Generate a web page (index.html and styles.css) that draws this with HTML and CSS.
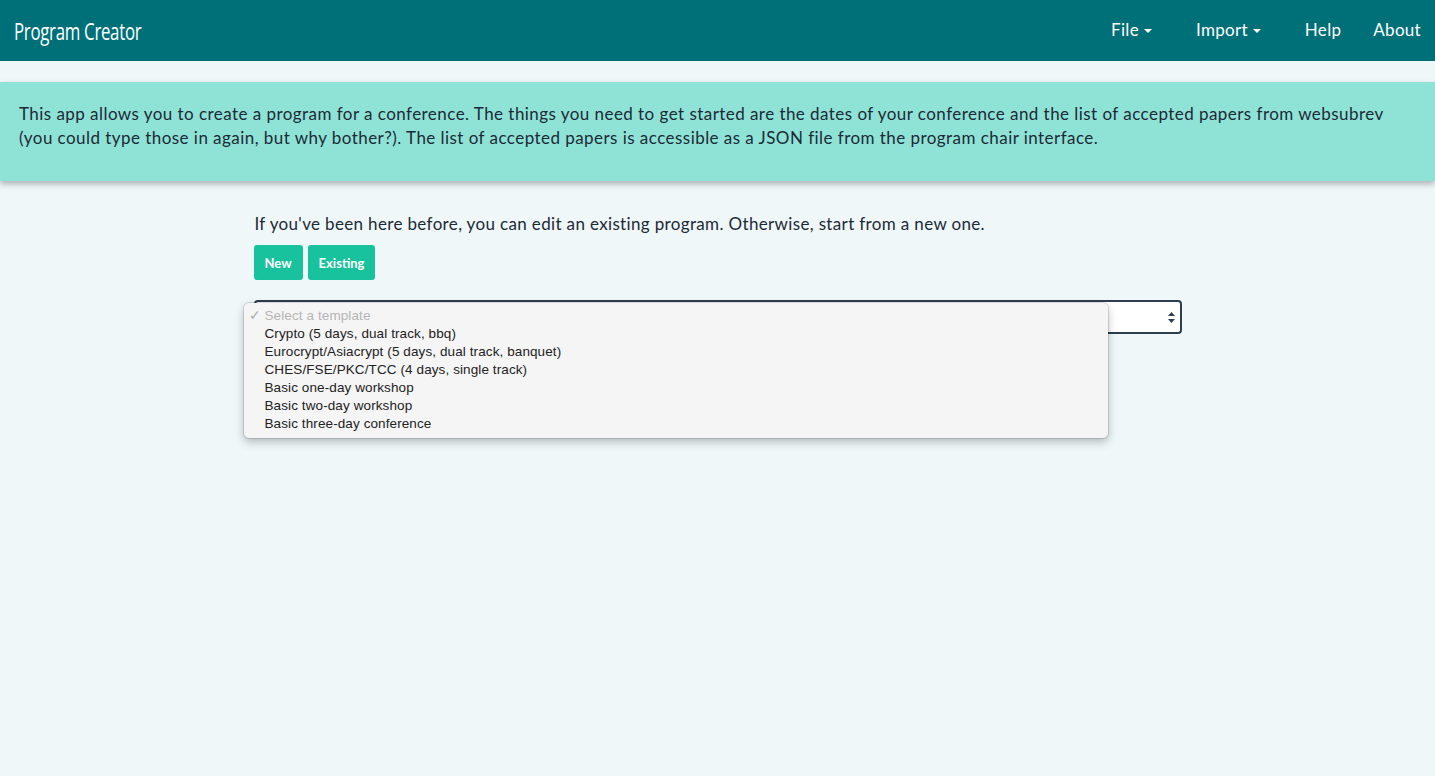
FILE: index.html
```html
<!DOCTYPE html>
<html>
<head>
<meta charset="utf-8">
<title>Program Creator</title>
<link rel="stylesheet" href="styles.css">
</head>
<body>
<nav class="navbar">
  <div class="brand">Program Creator</div>
  <ul class="nav">
    <li class="dropdown">File <span class="caret"></span></li>
    <li class="dropdown">Import <span class="caret"></span></li>
    <li>Help</li>
    <li>About</li>
  </ul>
</nav>
<div class="intro">
  This app allows you to create a program for a conference. The things you need to get started are the dates of your conference and the list of accepted papers from websubrev (you could type those in again, but why bother?). The list of accepted papers is accessible as a JSON file from the program chair interface.
</div>
<main class="main">
  <p class="lead">If you've been here before, you can edit an existing program. Otherwise, start from a new one.</p>
  <div class="buttons">
    <button class="btn">New</button>
    <button class="btn">Existing</button>
  </div>
  <div class="select-wrap">
    <div class="select">
      <svg class="arrows" width="7" height="11" viewBox="0 0 7 11"><path d="M3.5 0 L7 4 H0 Z M3.5 11 L0 7 H7 Z" fill="#2c3e50"/></svg>
    </div>
    <ul class="menu">
      <li class="placeholder"><span class="check">✓</span>Select a template</li>
      <li>Crypto (5 days, dual track, bbq)</li>
      <li>Eurocrypt/Asiacrypt (5 days, dual track, banquet)</li>
      <li>CHES/FSE/PKC/TCC (4 days, single track)</li>
      <li>Basic one-day workshop</li>
      <li>Basic two-day workshop</li>
      <li>Basic three-day conference</li>
    </ul>
  </div>
</main>
</body>
</html>
```
FILE: styles.css
```css
html, body {
  margin: 0;
  padding: 0;
}
body {
  background: #eff7f9;
  font-family: "Lato", "Open Sans", sans-serif;
  color: #1c2a36;
  height: 776px;
  overflow: hidden;
}
.navbar {
  height: 61px;
  background: #007078;
  display: flex;
  align-items: center;
  justify-content: space-between;
  padding: 0 0 0 14px;
}
.brand {
  color: #fff;
  font-family: "Open Sans", sans-serif;
  font-size: 24px;
  letter-spacing: -0.4px;
  transform: scaleX(0.7);
  transform-origin: left center;
  margin-top: -1px;
}
.nav {
  list-style: none;
  display: flex;
  margin: 0;
  padding: 0;
}
.nav li {
  color: #fff;
  font-family: "Lato", sans-serif;
  font-size: 17px;
  letter-spacing: 0.3px;
  padding: 0 16px;
  display: flex;
  align-items: center;
  gap: 5px;
  margin-top: -2px;
}
.nav li.dropdown {
  padding-right: 28px;
}
.nav li:last-child {
  padding-right: 14px;
}
.caret {
  display: inline-block;
  width: 0;
  height: 0;
  border-top: 4px solid #fff;
  border-left: 4px solid transparent;
  border-right: 4px solid transparent;
  margin-top: 2px;
}
.intro {
  margin-top: 21px;
  background: #8fe3d6;
  padding: 20px 19px 31px 19px;
  font-size: 17px;
  letter-spacing: 0.45px;
  line-height: 24px;
  color: #1c2a36;
  box-shadow: 0 3px 6px rgba(0, 0, 0, 0.28);
}
.main {
  width: 928px;
  margin: 0 auto;
  padding-top: 31px;
}
.lead {
  margin: 0 0 0 1px;
  font-size: 17px;
  letter-spacing: 0.35px;
  line-height: 24px;
}
.buttons {
  display: flex;
  gap: 5px;
  margin-top: 9px;
}
.btn {
  background: #18c29c;
  color: #fff;
  border: none;
  border-radius: 3px;
  height: 35px;
  padding: 0 11px;
  font-family: "Lato", sans-serif;
  font-weight: bold;
  font-size: 13px;
}
.select-wrap {
  position: relative;
  margin-top: 20px;
}
.select {
  height: 30px;
  border: 2px solid #2c3e50;
  border-radius: 4px;
  background: #fff;
  display: flex;
  align-items: center;
  justify-content: flex-end;
  padding-right: 5px;
}
.menu {
  position: absolute;
  left: -10px;
  top: 3px;
  width: 864px;
  margin: 0;
  padding: 4px 0 5px 0;
  list-style: none;
  background: #f5f5f5;
  border-radius: 5px;
  box-shadow: 0 0 0 1px rgba(0,0,0,0.12), 0 4px 10px rgba(0, 0, 0, 0.25);
  font-family: "Liberation Sans", "Noto Sans", sans-serif;
  font-size: 13.5px;
  letter-spacing: 0.1px;
  color: #222;
}
.menu li {
  height: 18px;
  line-height: 18px;
  padding-left: 21px;
  position: relative;
}
.menu li.placeholder {
  color: #b5b5b5;
}
.check {
  position: absolute;
  left: 5px;
  color: #aaa;
}
```
